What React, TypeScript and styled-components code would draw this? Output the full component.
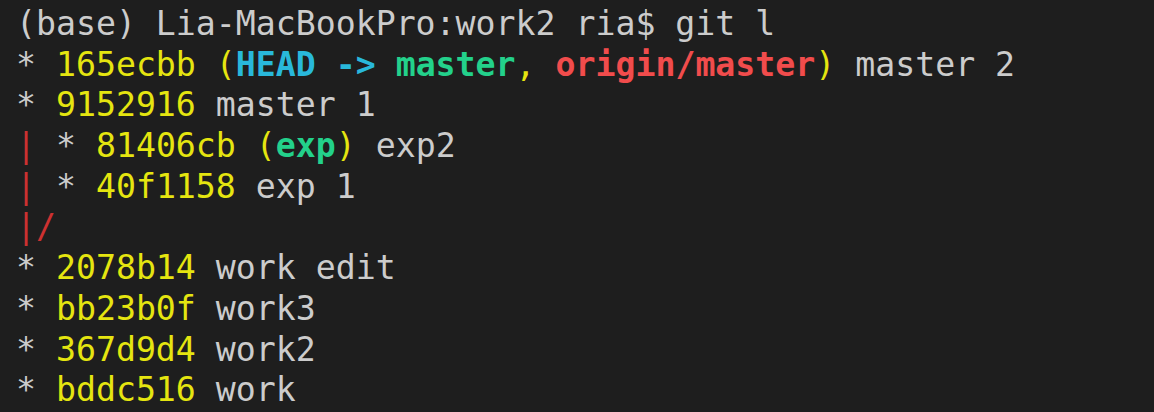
import styled, { createGlobalStyle } from 'styled-components';

type Tone = 'plain' | 'hash' | 'head' | 'branch' | 'remote' | 'graph';

const tones: Record<Tone, string> = {
  plain: '#cccccc',
  hash: '#e5e510',
  head: '#29b8db',
  branch: '#23d18b',
  remote: '#f14c4c',
  graph: '#cd3131',
};

type Part = [string, Tone, boolean?];

const lines: Part[][] = [
  [['(base) Lia-MacBookPro:work2 ria$ git l', 'plain']],
  [
    ['* ', 'plain'],
    ['165ecbb (', 'hash'],
    ['HEAD -> ', 'head', true],
    ['master', 'branch', true],
    [', ', 'hash'],
    ['origin/master', 'remote', true],
    [')', 'hash'],
    [' master 2', 'plain'],
  ],
  [['* ', 'plain'], ['9152916', 'hash'], [' master 1', 'plain']],
  [
    ['|', 'graph'],
    [' * ', 'plain'],
    ['81406cb (', 'hash'],
    ['exp', 'branch', true],
    [')', 'hash'],
    [' exp2', 'plain'],
  ],
  [['|', 'graph'], [' * ', 'plain'], ['40f1158', 'hash'], [' exp 1', 'plain']],
  [['|/', 'graph']],
  [['* ', 'plain'], ['2078b14', 'hash'], [' work edit', 'plain']],
  [['* ', 'plain'], ['bb23b0f', 'hash'], [' work3', 'plain']],
  [['* ', 'plain'], ['367d9d4', 'hash'], [' work2', 'plain']],
  [['* ', 'plain'], ['bddc516', 'hash'], [' work', 'plain']],
];

const GlobalStyle = createGlobalStyle`
  html, body {
    margin: 0;
    padding: 0;
    background: #1e1e1e;
  }
`;

const Terminal = styled.div`
  width: 1154px;
  height: 412px;
  overflow: hidden;
  box-sizing: border-box;
  background: #1e1e1e;
  padding: 4px 0 0 16px;
  font-family: 'DejaVu Sans Mono', 'Liberation Mono', monospace;
  font-size: 33.2px;
  line-height: 40.7px;
  display: flex;
  flex-direction: column;
`;

const Line = styled.div`
  white-space: pre;
  height: 40.7px;
  flex: none;
`;

const Span = styled.span<{ $tone: Tone; $bold?: boolean }>`
  color: ${p => tones[p.$tone]};
  font-weight: ${p => (p.$bold ? 700 : 400)};
`;

export default function App() {
  return (
    <>
      <GlobalStyle />
      <Terminal>
        {lines.map((parts, i) => (
          <Line key={i}>
            {parts.map(([text, tone, bold], j) => (
              <Span key={j} $tone={tone} $bold={bold}>
                {text}
              </Span>
            ))}
          </Line>
        ))}
      </Terminal>
    </>
  );
}
